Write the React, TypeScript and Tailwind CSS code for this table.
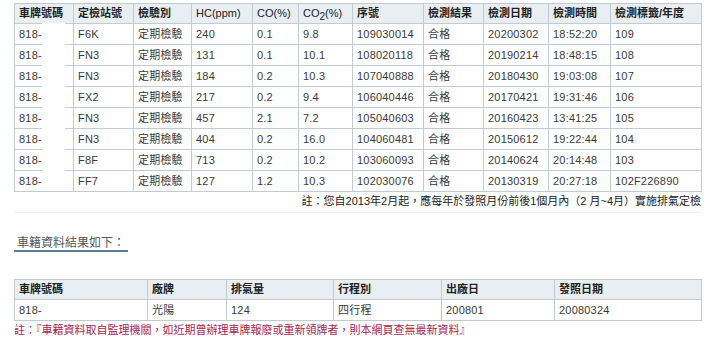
import React from 'react';

const inspections = [
  ['F6K', '240', '0.1', '9.8', '109030014', '20200302', '18:52:20', '109'],
  ['FN3', '131', '0.1', '10.1', '108020118', '20190214', '18:48:15', '108'],
  ['FN3', '184', '0.2', '10.3', '107040888', '20180430', '19:03:08', '107'],
  ['FX2', '217', '0.2', '9.4', '106040446', '20170421', '19:31:46', '106'],
  ['FN3', '457', '2.1', '7.2', '105040603', '20160423', '13:41:25', '105'],
  ['FN3', '404', '0.2', '16.0', '104060481', '20150612', '19:22:44', '104'],
  ['F8F', '713', '0.2', '10.2', '103060093', '20140624', '20:14:48', '103'],
  ['FF7', '127', '1.2', '10.3', '102030076', '20130319', '20:27:18', '102F226890'],
];

const colWidths1 = [59, 60, 58, 61, 46, 54, 71, 60, 65, 62, 91];
const colWidths2 = [133, 79, 107, 108, 113, 147];

const th = 'h-[20px] border border-[#c0cbd3] bg-[#e8eef1] px-[4px] text-left align-middle font-bold text-[#222]';
const td = 'h-[21px] border border-[#c0cbd3] px-[4px] align-middle text-[#3a3a3a] tracking-[0.2px]';

function App() {
  return (
    <div className="h-[342px] w-[720px] overflow-hidden bg-white font-['Liberation_Sans','Noto_Sans_CJK_TC',sans-serif] text-[11px]">
      <div className="w-[701px] pl-[14px] pt-[3px]">
        {/* Inspection records */}
        <div className="relative">
          <table className="w-[687px] table-fixed border-collapse">
            <colgroup>
              {colWidths1.map((w, i) => (
                <col key={i} style={{ width: w }} />
              ))}
            </colgroup>
            <thead>
              <tr>
                <th className={th}>車牌號碼</th>
                <th className={th}>定檢站號</th>
                <th className={th}>檢驗別</th>
                <th className={th}><span className="font-normal">HC(ppm)</span></th>
                <th className={th}><span className="font-normal">CO(%)</span></th>
                <th className={th}>
                  <span className="font-normal">CO<sub className="text-[10px]">2</sub>(%)</span>
                </th>
                <th className={th}>序號</th>
                <th className={th}>檢測結果</th>
                <th className={th}>檢測日期</th>
                <th className={th}>檢測時間</th>
                <th className={th}>檢測標籤/年度</th>
              </tr>
            </thead>
            <tbody>
              {inspections.map((r, i) => (
                <tr key={i}>
                  <td className={td}>818-</td>
                  <td className={td}>{r[0]}</td>
                  <td className={td}>定期檢驗</td>
                  <td className={td}>{r[1]}</td>
                  <td className={td}>{r[2]}</td>
                  <td className={td}>{r[3]}</td>
                  <td className={td}>{r[4]}</td>
                  <td className={td}>合格</td>
                  <td className={td}>{r[5]}</td>
                  <td className={td}>{r[6]}</td>
                  <td className={td}>{r[7]}</td>
                </tr>
              ))}
            </tbody>
          </table>
          {/* masked plate digits */}
          <div className="absolute left-[28px] top-[20px] h-[167px] w-[23px] bg-white" />
        </div>

        <p className="text-right leading-[18px] text-[#222]">
          註：您自2013年2月起，應每年於發照月份前後1個月內（2 月~4月）實施排氣定檢
        </p>
        <div className="mt-[2px] h-px bg-[#eeeeee]" />

        <div className="mt-[22px]">
          <span className="inline-block border-b-2 border-[#5f7e99] pl-[3px] pr-[3px] text-[12px] leading-[14px] text-[#555]">
            車籍資料結果如下：
          </span>
        </div>

        {/* Vehicle registration */}
        <table className="mt-[27px] w-[687px] table-fixed border-collapse">
          <colgroup>
            {colWidths2.map((w, i) => (
              <col key={i} style={{ width: w }} />
            ))}
          </colgroup>
          <thead>
            <tr>
              <th className={th}>車牌號碼</th>
              <th className={th}>廠牌</th>
              <th className={th}>排氣量</th>
              <th className={th}>行程別</th>
              <th className={th}>出廠日</th>
              <th className={th}>發照日期</th>
            </tr>
          </thead>
          <tbody>
            <tr>
              <td className={td}>818-</td>
              <td className={td}>光陽</td>
              <td className={td}>124</td>
              <td className={td}>四行程</td>
              <td className={td}>200801</td>
              <td className={td}>20080324</td>
            </tr>
          </tbody>
        </table>
        <p className="leading-[18px] text-[#a8254f]">
          註：『車籍資料取自監理機關，如近期曾辦理車牌報廢或重新領牌者，則本網頁查無最新資料』
        </p>
      </div>
    </div>
  );
}

export default App;
